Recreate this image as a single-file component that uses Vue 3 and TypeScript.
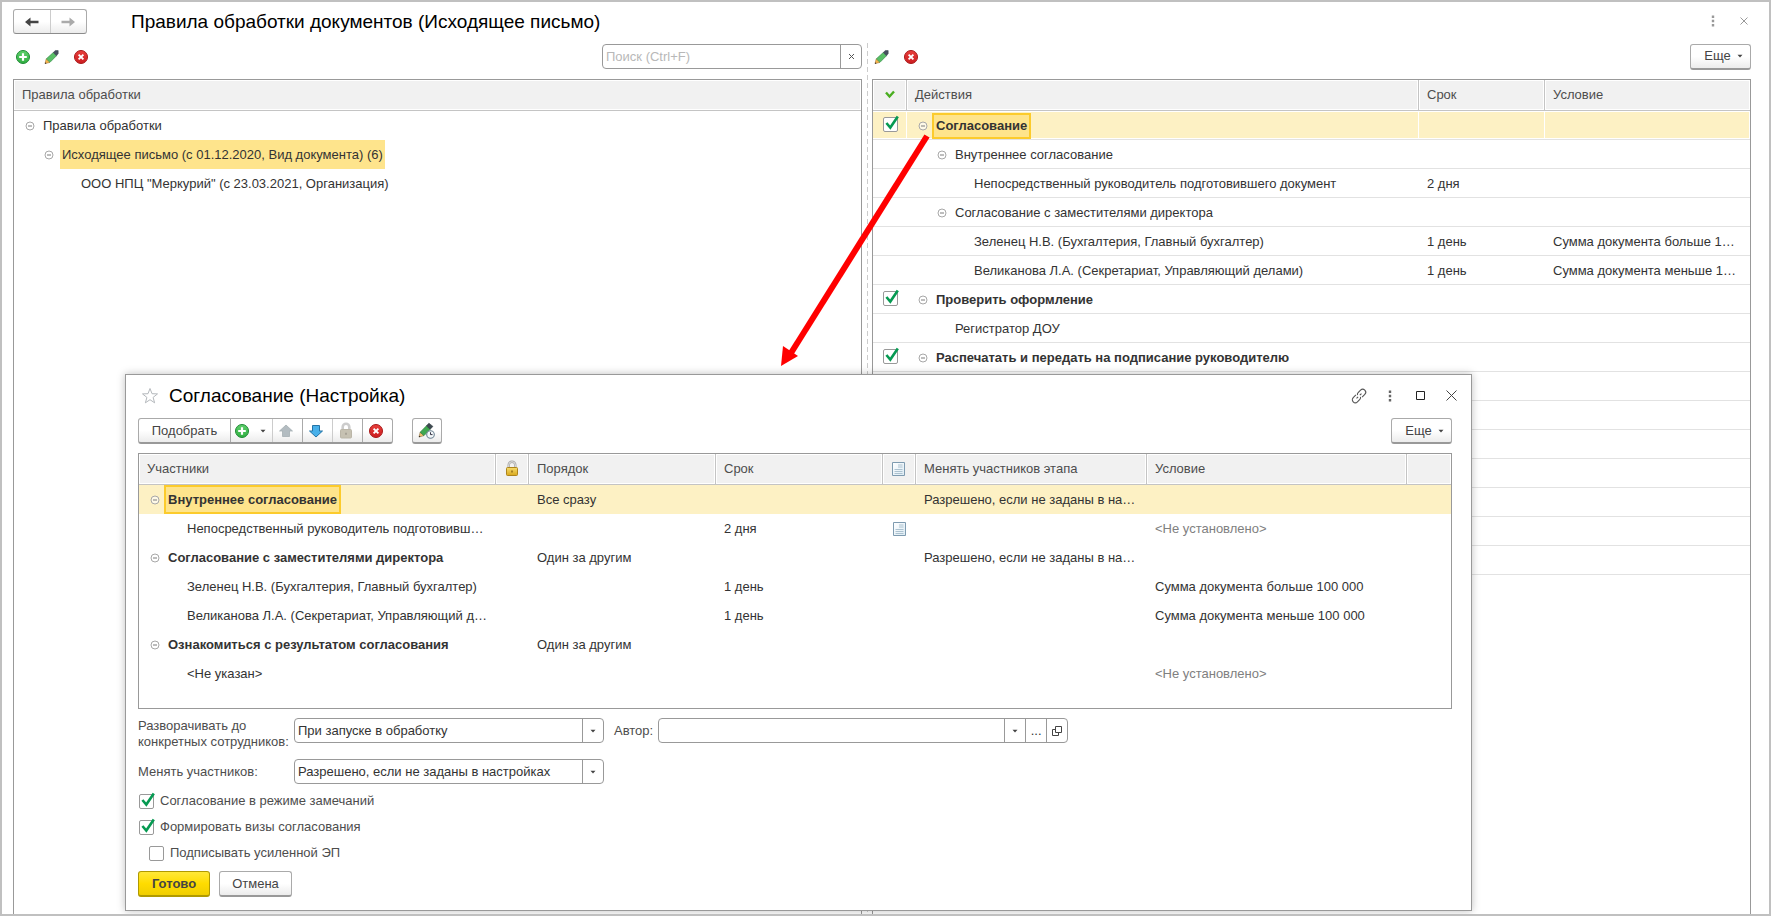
<script setup lang="ts">
import { ref } from 'vue'

interface RuleRow {
  text: string
  level: number
  group: boolean
  selected?: boolean
}

interface ActionRow {
  text: string
  level: number
  group: boolean
  bold?: boolean
  checked?: boolean
  term?: string
  condition?: string
  selected?: boolean
}

interface StageRow {
  text: string
  group: boolean
  order?: string
  term?: string
  note?: boolean
  change?: string
  condition?: string
  selected?: boolean
}

const rules: RuleRow[] = [
  { text: 'Правила обработки', level: 0, group: true },
  { text: 'Исходящее письмо (с 01.12.2020, Вид документа) (6)', level: 1, group: true, selected: true },
  { text: 'ООО НПЦ "Меркурий" (с 23.03.2021, Организация)', level: 2, group: false },
]

const actions = ref<ActionRow[]>([
  { text: 'Согласование', level: 0, group: true, bold: true, checked: true, selected: true },
  { text: 'Внутреннее согласование', level: 1, group: true },
  { text: 'Непосредственный руководитель подготовившего документ', level: 2, group: false, term: '2 дня' },
  { text: 'Согласование с заместителями директора', level: 1, group: true },
  { text: 'Зеленец Н.В. (Бухгалтерия, Главный бухгалтер)', level: 2, group: false, term: '1 день', condition: 'Сумма документа больше 1…' },
  { text: 'Великанова Л.А. (Секретариат, Управляющий делами)', level: 2, group: false, term: '1 день', condition: 'Сумма документа меньше 1…' },
  { text: 'Проверить оформление', level: 0, group: true, bold: true, checked: true },
  { text: 'Регистратор ДОУ', level: 1, group: false },
  { text: 'Распечатать и передать на подписание руководителю', level: 0, group: true, bold: true, checked: true },
])
const emptyRows = 7

const stages: StageRow[] = [
  { text: 'Внутреннее согласование', group: true, order: 'Все сразу', change: 'Разрешено, если не заданы в на…', selected: true },
  { text: 'Непосредственный руководитель подготовивш…', group: false, term: '2 дня', note: true, condition: '<Не установлено>' },
  { text: 'Согласование с заместителями директора', group: true, order: 'Один за другим', change: 'Разрешено, если не заданы в на…' },
  { text: 'Зеленец Н.В. (Бухгалтерия, Главный бухгалтер)', group: false, term: '1 день', condition: 'Сумма документа больше 100 000' },
  { text: 'Великанова Л.А. (Секретариат, Управляющий д…', group: false, term: '1 день', condition: 'Сумма документа меньше 100 000' },
  { text: 'Ознакомиться с результатом согласования', group: true, order: 'Один за другим' },
  { text: '<Не указан>', group: false, condition: '<Не установлено>' },
]

const search = ref('')
const author = ref('')
const expandMode = ref('При запуске в обработку')
const changeMode = ref('Разрешено, если не заданы в настройках')
const remarks = ref(true)
const visas = ref(true)
const signed = ref(false)
</script>

<template>
  <div class="window">
    <svg class="sprite" aria-hidden="true">
      <defs>
        <linearGradient id="g-green" x1="0" y1="0" x2="0" y2="1">
          <stop offset="0" stop-color="#5fd06c" /><stop offset="1" stop-color="#2fae40" />
        </linearGradient>
        <linearGradient id="g-red" x1="0" y1="0" x2="0" y2="1">
          <stop offset="0" stop-color="#e8403c" /><stop offset="1" stop-color="#cc1c20" />
        </linearGradient>
        <linearGradient id="g-gold" x1="0" y1="0" x2="0" y2="1">
          <stop offset="0" stop-color="#f6dc6c" /><stop offset="1" stop-color="#d9a81c" />
        </linearGradient>
        <linearGradient id="g-page" x1="0" y1="0" x2="1" y2="1">
          <stop offset="0" stop-color="#ffffff" /><stop offset="1" stop-color="#dcebf4" />
        </linearGradient>
        <symbol id="i-add" viewBox="0 0 16 16">
          <circle cx="8" cy="8" r="6.5" fill="url(#g-green)" stroke="#1e8a34" />
          <path d="M8 4.2v7.6M4.2 8h7.6" stroke="#fff" stroke-width="2.2" />
        </symbol>
        <symbol id="i-del" viewBox="0 0 16 16">
          <circle cx="8" cy="8" r="6.5" fill="url(#g-red)" stroke="#a81818" />
          <path d="M5.6 5.6l4.8 4.8M10.4 5.6l-4.8 4.8" stroke="#fff" stroke-width="1.9" />
        </symbol>
        <symbol id="i-pencil" viewBox="0 0 16 16">
          <path d="M1 14.600l1.200-4.800 3.800 3.600z" fill="#f5b54c" stroke="#9a6a2c" stroke-width=".5" />
          <path d="M.9 14.800l.4-1.600 1.200 1.200z" fill="#222" />
          <path d="M2.400 9.800L9.300 3.500l3.200 3.200L6 13.300z" fill="#58bf66" stroke="#3a8f4a" stroke-width=".7" />
          <path d="M9.300 3.500l2-1.900h2.900v2.900l-1.700 2.200z" fill="#46505e" stroke="#333c48" stroke-width=".5" />
        </symbol>
        <symbol id="i-pencil-clock" viewBox="0 0 18 18">
          <path d="M1 15l1.200-4.800L6 13.600z" fill="#f3c06c" stroke="#8a6a3c" stroke-width=".6" />
          <path d="M.9 15.200l.4-1.500 1.200 1.100z" fill="#222" />
          <path d="M2.200 10.200L8.500 3.800l3.700 3.400-6.200 6.400z" fill="#3fa850" stroke="#2c7d3c" stroke-width=".7" />
          <path d="M8.500 3.800l2.400-2.600 4 3.200-2.700 2.800z" fill="#3d4a50" stroke="#2c363c" stroke-width=".6" />
          <circle cx="12.500" cy="12.500" r="3.800" fill="#f4f8fa" stroke="#6d8292" stroke-width="1.1" />
          <path d="M12.500 10.300v2.300h2" fill="none" stroke="#334" />
        </symbol>
        <symbol id="i-up" viewBox="0 0 16 16">
          <path d="M8 2l6.500 6h-3v5.500h-7V8h-3z" fill="#b3bcc1" stroke="#a5aeb3" stroke-width=".8" stroke-linejoin="round" />
        </symbol>
        <symbol id="i-down" viewBox="0 0 16 16">
          <path d="M8 14l6.500-6h-3V2.500h-7V8h-3z" fill="#48b0ea" stroke="#2474a6" stroke-linejoin="round" />
        </symbol>
        <symbol id="i-lock" viewBox="0 0 16 18">
          <path d="M4.700 9V5a3.300 3.300 0 0 1 6.600 0v4" fill="none" stroke="#a8a8a8" stroke-width="2.400" />
          <path d="M4.700 9V5a3.300 3.300 0 0 1 6.600 0v4" fill="none" stroke="#dedede" />
          <rect x="2.500" y="7.500" width="11" height="8" rx="1" fill="url(#g-gold)" stroke="#ad841c" />
          <path d="M8 10.500v2" stroke="#8a6414" stroke-width="1.400" />
        </symbol>
        <symbol id="i-lock-off" viewBox="0 0 16 18">
          <path d="M4.700 9V5a3.300 3.300 0 0 1 6.600 0v4" fill="none" stroke="#ccc" stroke-width="2.600" />
          <rect x="2.500" y="7.500" width="11" height="8.500" rx="1" fill="#c6c1b2" stroke="#bbb6a8" />
          <path d="M8 10.700v2" stroke="#9a958a" stroke-width="1.400" />
        </symbol>
        <symbol id="i-page" viewBox="0 0 14 16">
          <path d="M.5 1.500h12v13H.5z" fill="url(#g-page)" stroke="#7e9bb0" />
          <path d="M6 4h4.500M6 6h4.500M2.500 8.500h8M2.500 10.500h8M2.500 12.500h8" stroke="#a5bccb" stroke-width=".9" />
        </symbol>
        <symbol id="i-minus" viewBox="0 0 10 10">
          <circle cx="5" cy="5" r="4" fill="#fff" fill-opacity=".6" stroke="#a8a8a8" />
          <path d="M3 5h4" stroke="#7c7c7c" />
        </symbol>
        <symbol id="i-check" viewBox="0 0 17 17">
          <path d="M3.400 8l3.900 4.500L14.800 1.400" fill="none" stroke="#069a52" stroke-width="2.600" />
        </symbol>
        <symbol id="i-dots" viewBox="0 0 4 12">
          <path d="M.8.5h2.400v2.500H.8zM.8 4.700h2.400v2.500H.8zM.8 9h2.400v2.500H.8z" fill="currentColor" />
        </symbol>
        <symbol id="i-caret" viewBox="0 0 6 4">
          <path d="M.5.800h5L3 3.600z" fill="#444" />
        </symbol>
        <symbol id="i-back" viewBox="0 0 16 12">
          <path d="M1 6l5.500-4.500v3.300h8v2.400h-8v3.300z" fill="currentColor" />
        </symbol>
        <symbol id="i-forward" viewBox="0 0 16 12">
          <path d="M15 6L9.500 1.500v3.300h-8v2.400h8v3.300z" fill="currentColor" />
        </symbol>
      </defs>
    </svg>

    <header class="titlebar">
      <div class="nav">
        <button type="button" aria-label="Назад"><svg width="16" height="12"><use href="#i-back" /></svg></button>
        <button type="button" class="forward" aria-label="Вперед"><svg width="16" height="12"><use href="#i-forward" /></svg></button>
      </div>
      <h1>Правила обработки документов (Исходящее письмо)</h1>
      <div class="controls main-controls">
        <button type="button" class="plain" aria-label="Меню"><svg width="4" height="12"><use href="#i-dots" /></svg></button>
        <button type="button" class="plain" aria-label="Закрыть"><svg width="8" height="8" viewBox="0 0 8 8"><path d="M.5.5l7 7M7.500.5l-7 7" stroke="currentColor" /></svg></button>
      </div>
    </header>

    <main class="panes">
      <section class="pane">
        <div class="bar">
          <button type="button" class="plain" aria-label="Добавить"><svg width="16" height="16"><use href="#i-add" /></svg></button>
          <button type="button" class="plain" aria-label="Изменить"><svg width="16" height="16"><use href="#i-pencil" /></svg></button>
          <button type="button" class="plain" aria-label="Удалить"><svg width="16" height="16"><use href="#i-del" /></svg></button>
          <div class="field search">
            <input v-model="search" type="text" placeholder="Поиск (Ctrl+F)" aria-label="Поиск">
            <button type="button" class="cell-button" aria-label="Очистить" @click="search = ''"><svg width="7" height="7" viewBox="0 0 7 7"><path d="M1 1l5 5M6 1l-5 5" stroke="#555" /></svg></button>
          </div>
        </div>
        <div class="grid">
          <table>
            <thead><tr><th>Правила обработки</th></tr></thead>
            <tbody>
              <tr v-for="row in rules" :key="row.text">
                <td>
                  <div class="tree" :class="'level-' + row.level">
                    <svg v-if="row.group" class="toggle" width="10" height="10"><use href="#i-minus" /></svg>
                    <span v-else class="toggle"></span>
                    <span class="tree-text" :class="{ marked: row.selected }">{{ row.text }}</span>
                  </div>
                </td>
              </tr>
            </tbody>
          </table>
        </div>
      </section>

      <div class="splitter"></div>

      <section class="pane">
        <div class="bar">
          <button type="button" class="plain" aria-label="Изменить действие"><svg width="16" height="16"><use href="#i-pencil" /></svg></button>
          <button type="button" class="plain" aria-label="Удалить действие"><svg width="16" height="16"><use href="#i-del" /></svg></button>
          <button type="button" class="button more">Еще <svg width="6" height="4"><use href="#i-caret" /></svg></button>
        </div>
        <div class="grid lined">
          <table>
            <colgroup><col class="w-mark"><col><col class="w-term"><col class="w-condition"></colgroup>
            <thead>
              <tr>
                <th class="center" aria-label="Включено"><svg width="10" height="10" viewBox="0 0 10 10"><path d="M1 2.500l3.500 4L9 1.500" fill="none" stroke="#4aae20" stroke-width="2.400" /></svg></th>
                <th>Действия</th>
                <th>Срок</th>
                <th>Условие</th>
              </tr>
            </thead>
            <tbody>
              <tr v-for="row in actions" :key="row.text" :class="{ current: row.selected }">
                <td class="center">
                  <span v-if="row.checked !== undefined" class="check">
                    <input v-model="row.checked" type="checkbox" :aria-label="row.text">
                    <svg v-if="row.checked" width="17" height="17"><use href="#i-check" /></svg>
                  </span>
                </td>
                <td>
                  <div class="tree" :class="['level-' + row.level, { bold: row.bold }]">
                    <svg v-if="row.group" class="toggle" width="10" height="10"><use href="#i-minus" /></svg>
                    <span v-else class="toggle"></span>
                    <span class="tree-text" :class="{ boxed: row.selected }">{{ row.text }}</span>
                  </div>
                </td>
                <td>{{ row.term }}</td>
                <td>{{ row.condition }}</td>
              </tr>
              <tr v-for="n in emptyRows" :key="n"><td></td><td></td><td></td><td></td></tr>
            </tbody>
          </table>
        </div>
      </section>
    </main>

    <section class="dialog" role="dialog" aria-labelledby="dialog-title">
      <header class="dialog-head">
        <svg width="18" height="18" viewBox="0 0 18 18"><path d="M9 1.500l2 5.200 5.500.2-4.400 3.500 1.500 5.400L9 12.700l-4.600 3.100 1.500-5.400L1.500 6.900 7 6.700z" fill="#fff" stroke="#b4b8bc" /></svg>
        <h2 id="dialog-title">Согласование (Настройка)</h2>
        <div class="controls dialog-controls">
          <button type="button" class="plain" aria-label="Ссылка">
            <svg width="18" height="18" viewBox="0 0 18 18"><g transform="rotate(-45 9 9)" fill="none" stroke="#555" stroke-width="1.100"><path d="M7.600 6H3.800a3 3 0 0 0 0 6h3.400a2.600 2.600 0 0 0 2.200-1.200" /><path d="M10.400 12h3.800a3 3 0 0 0 0-6h-3.400a2.600 2.600 0 0 0-2.200 1.200" /><path d="M5.500 9h2.300M10.200 9h2.300" /></g></svg>
          </button>
          <button type="button" class="plain" aria-label="Меню окна"><svg width="4" height="12"><use href="#i-dots" /></svg></button>
          <button type="button" class="plain" aria-label="Развернуть"><svg width="9" height="9" viewBox="0 0 9 9"><path d="M.5.5h8v8h-8z" fill="none" stroke="#222" /></svg></button>
          <button type="button" class="plain" aria-label="Закрыть окно"><svg width="11" height="11" viewBox="0 0 11 11"><path d="M.5.5l10 10M10.500.5l-10 10" stroke="#444" /></svg></button>
        </div>
      </header>

      <div class="dialog-bar">
        <div class="group">
          <button type="button" class="pick">Подобрать</button>
          <button type="button" class="add" aria-label="Добавить участника"><svg width="16" height="16"><use href="#i-add" /></svg><svg width="6" height="4"><use href="#i-caret" /></svg></button>
          <button type="button" class="off" aria-label="Вверх"><svg width="16" height="16"><use href="#i-up" /></svg></button>
          <button type="button" aria-label="Вниз"><svg width="16" height="16"><use href="#i-down" /></svg></button>
          <button type="button" class="off" aria-label="Заблокировать"><svg width="16" height="18"><use href="#i-lock-off" /></svg></button>
          <button type="button" aria-label="Удалить участника"><svg width="16" height="16"><use href="#i-del" /></svg></button>
        </div>
        <button type="button" class="button schedule" aria-label="Сроки"><svg width="18" height="18"><use href="#i-pencil-clock" /></svg></button>
        <button type="button" class="button more">Еще <svg width="6" height="4"><use href="#i-caret" /></svg></button>
      </div>

      <div class="grid stages">
        <table>
          <colgroup><col><col class="w-icon"><col class="w-order"><col class="w-days"><col class="w-icon"><col class="w-change"><col class="w-rule"><col class="w-rest"></colgroup>
          <thead>
            <tr>
              <th>Участники</th>
              <th class="center" aria-label="Блокировка"><svg width="16" height="18"><use href="#i-lock" /></svg></th>
              <th>Порядок</th>
              <th>Срок</th>
              <th class="center" aria-label="Описание"><svg width="14" height="16"><use href="#i-page" /></svg></th>
              <th>Менять участников этапа</th>
              <th>Условие</th>
              <th></th>
            </tr>
          </thead>
          <tbody>
            <tr v-for="row in stages" :key="row.text" :class="{ current: row.selected }">
              <td class="first">
                <div class="tree" :class="row.group ? 'level-0 bold' : 'level-1'">
                  <svg v-if="row.group" class="toggle" width="10" height="10"><use href="#i-minus" /></svg>
                  <span v-else class="toggle"></span>
                  <span class="tree-text" :class="{ boxed: row.selected }">{{ row.text }}</span>
                </div>
              </td>
              <td></td>
              <td>{{ row.order }}</td>
              <td>{{ row.term }}</td>
              <td class="center"><svg v-if="row.note" width="14" height="16"><use href="#i-page" /></svg></td>
              <td>{{ row.change }}</td>
              <td :class="{ muted: row.condition === '<Не установлено>' }">{{ row.condition }}</td>
              <td></td>
            </tr>
          </tbody>
        </table>
      </div>

      <form class="form" @submit.prevent>
        <div class="form-row">
          <label class="caption" for="expand-mode">Разворачивать до конкретных сотрудников:</label>
          <div class="field select">
            <select id="expand-mode" v-model="expandMode"><option>При запуске в обработку</option></select>
            <span class="arrow"><svg width="6" height="4"><use href="#i-caret" /></svg></span>
          </div>
          <label class="author-label" for="author">Автор:</label>
          <div class="field author">
            <input id="author" v-model="author" type="text">
            <button type="button" class="cell-button" aria-label="Выбрать из списка"><svg width="6" height="4"><use href="#i-caret" /></svg></button>
            <button type="button" class="cell-button" aria-label="Выбрать">...</button>
            <button type="button" class="cell-button" aria-label="Открыть"><svg width="10" height="10" viewBox="0 0 10 10"><path d="M3.500.5h6v6h-6zM3.500 3.500h-3v6h6v-3" fill="none" stroke="#444" /></svg></button>
          </div>
        </div>
        <div class="form-row second">
          <label class="caption" for="change-mode">Менять участников:</label>
          <div class="field select">
            <select id="change-mode" v-model="changeMode"><option>Разрешено, если не заданы в настройках</option></select>
            <span class="arrow"><svg width="6" height="4"><use href="#i-caret" /></svg></span>
          </div>
        </div>
        <label class="option">
          <span class="check"><input v-model="remarks" type="checkbox"><svg v-if="remarks" width="17" height="17"><use href="#i-check" /></svg></span>
          Согласование в режиме замечаний
        </label>
        <label class="option">
          <span class="check"><input v-model="visas" type="checkbox"><svg v-if="visas" width="17" height="17"><use href="#i-check" /></svg></span>
          Формировать визы согласования
        </label>
        <label class="option nested">
          <span class="check"><input v-model="signed" type="checkbox"><svg v-if="signed" width="17" height="17"><use href="#i-check" /></svg></span>
          Подписывать усиленной ЭП
        </label>
        <div class="actions">
          <button type="submit" class="button primary">Готово</button>
          <button type="button" class="button">Отмена</button>
        </div>
      </form>
    </section>

    <svg class="pointer" width="160" height="240" viewBox="0 0 160 240" aria-hidden="true">
      <path d="M152 8L16 225" stroke="#f00" stroke-width="6" />
      <path d="M6 238l2-20 15 10z" fill="#f00" />
    </svg>
  </div>
</template>

<style>
body {
  margin: 0;
  background: #fff;
}
</style>

<style scoped>
.window {
  position: relative;
  display: flex;
  flex-direction: column;
  box-sizing: border-box;
  min-height: 100vh;
  overflow: hidden;
  border: 2px solid #c0c0c0;
  padding: 7px 18px 0 11px;
  background: #fff;
  color: #333;
  font: 13px/16px "Liberation Sans", Arial, sans-serif;
}
.sprite {
  position: absolute;
  width: 0;
  height: 0;
}
svg {
  display: block;
  flex: none;
}
button,
input,
select {
  box-sizing: border-box;
  margin: 0;
  padding: 0;
  border: 0;
  background: none;
  color: inherit;
  font: inherit;
}
h1,
h2 {
  margin: 0;
  color: #000;
  font-size: 19px;
  font-weight: 400;
  line-height: 24px;
}
.plain {
  display: flex;
  align-items: center;
  justify-content: center;
}

.titlebar {
  display: flex;
  align-items: center;
  height: 25px;
}
.nav {
  display: flex;
  box-sizing: border-box;
  width: 74px;
  height: 25px;
  margin-right: 44px;
  border: 1px solid #aaa;
  border-bottom-color: #8c8c8c;
  border-radius: 3px;
  background: linear-gradient(#fff 50%, #ececec);
  color: #444;
}
.nav button {
  display: flex;
  flex: 1;
  align-items: center;
  justify-content: center;
}
.nav .forward {
  border-left: 1px solid #ccc;
  color: #aaa;
}
.controls {
  display: flex;
  align-items: center;
  margin-left: auto;
}
.controls .plain {
  width: 31px;
  height: 24px;
}
.main-controls {
  padding-bottom: 2px;
  margin-right: -8px;
  color: #999;
}

.panes {
  display: grid;
  flex: 1;
  grid-template-columns: minmax(0, 849fr) 10px minmax(0, 879fr);
  padding-top: 9px;
}
.pane {
  display: flex;
  flex-direction: column;
  min-width: 0;
}
.splitter {
  width: 1px;
  margin: 0 auto;
  background: repeating-linear-gradient(#ccc 0 5px, transparent 5px 8px);
}
.bar {
  display: flex;
  gap: 13px;
  align-items: center;
  height: 27px;
  padding-left: 2px;
  margin-bottom: 9px;
}
.field {
  position: relative;
  display: flex;
  box-sizing: border-box;
  height: 25px;
  border: 1px solid #999;
  border-radius: 4px;
  background: #fff;
  color: #333;
}
.field input {
  flex: 1;
  min-width: 0;
  padding: 0 3px;
  outline: none;
}
.field input::placeholder {
  color: #b8b8b8;
  opacity: 1;
}
.cell-button {
  display: flex;
  flex: none;
  align-items: center;
  justify-content: center;
  width: 21px;
  border-left: 1px solid #999;
}
.search {
  width: 260px;
  margin-left: auto;
}
.button {
  display: flex;
  box-sizing: border-box;
  align-items: center;
  justify-content: center;
  height: 26px;
  border: 1px solid #aaa;
  border-bottom: 2px solid #999;
  border-radius: 3px;
  background: linear-gradient(#fff 50%, #ececec);
  color: #444;
}
.more {
  gap: 6px;
  width: 61px;
  padding-left: 6px;
  margin-left: auto;
}

.grid {
  flex: 1;
  border: 1px solid #999;
  border-bottom: 0;
  background: #fff;
}
table {
  width: 100%;
  border-spacing: 0;
  table-layout: fixed;
}
th,
td {
  box-sizing: border-box;
  overflow: hidden;
  padding: 0 8px;
  text-align: left;
  text-overflow: ellipsis;
  white-space: nowrap;
}
th {
  height: 31px;
  border-right: 1px solid #c4c4c4;
  border-bottom: 1px solid #c4c4c4;
  background: #f1f1f1;
  box-shadow: inset 0 0 0 1px #fff;
  color: #4d4d4d;
  font-weight: 400;
}
th:last-child {
  border-right: 0;
}
td {
  height: 29px;
}
.first {
  padding-right: 2px;
}
.lined td {
  padding-top: 1px;
  border-bottom: 1px solid #e2e2e2;
}
th.center,
td.center {
  padding: 0;
}
.lined td.center {
  padding: 0 0 1px;
}
.center > svg,
.center > .check {
  margin: 0 auto;
}
.current td {
  background: #fdf1c4;
}
.lined .current td {
  box-shadow: inset -1px 0 #fff, inset 0 1px #fff, inset 0 -1px #fff;
}
.w-mark { width: 34px; }
.w-term { width: 126px; }
.w-condition { width: 205px; }
.w-icon { width: 33px; }
.w-order { width: 187px; }
.w-days { width: 167px; }
.w-change { width: 231px; }
.w-rule { width: 260px; }
.w-rest { width: 44px; }

.tree {
  display: flex;
  align-items: center;
  margin-left: 3px;
}
.level-1 {
  padding-left: 19px;
}
.level-2 {
  padding-left: 38px;
}
.toggle {
  flex: none;
  width: 10px;
  margin-right: 6px;
}
.tree-text {
  overflow: hidden;
  padding: 0 2px;
  line-height: 29px;
  text-overflow: ellipsis;
}
.lined .tree-text {
  line-height: 26px;
}
.bold {
  font-weight: 700;
}
.marked {
  background: #fee48c;
}
.boxed {
  padding: 0 4px;
  margin-left: -2px;
  outline: 2px solid #fccb2c;
  outline-offset: -2px;
  background: #fee48c;
}
.check {
  position: relative;
  display: block;
  flex: none;
  width: 15px;
  height: 15px;
}
.check input {
  display: block;
  width: 15px;
  height: 15px;
  border: 1px solid #999;
  border-radius: 2px;
  appearance: none;
  background: #fff;
}
.check svg {
  position: absolute;
  top: -2px;
  left: 0;
  pointer-events: none;
}
.muted {
  color: #808080;
}

.dialog {
  position: absolute;
  top: 372px;
  right: 297px;
  left: 123px;
  box-sizing: border-box;
  border: 1px solid #999;
  padding: 8px 19px 13px 12px;
  background: #fff;
  box-shadow: 0 0 8px rgb(0 0 0 / 25%);
}
.dialog-head {
  display: flex;
  gap: 10px;
  align-items: center;
  height: 25px;
  padding-left: 3px;
}
.dialog-controls {
  margin-right: -15px;
  color: #666;
}
.dialog-bar {
  display: flex;
  align-items: center;
  margin: 10px 0 9px;
}
.group {
  display: flex;
  box-sizing: border-box;
  height: 26px;
  border: 1px solid #aaa;
  border-bottom: 2px solid #999;
  border-radius: 3px;
  background: linear-gradient(#fff 50%, #ececec);
  color: #444;
}
.group button {
  display: flex;
  align-items: center;
  justify-content: center;
  width: 30px;
  padding-right: 3px;
  border-left: 1px solid #aaa;
}
.group .pick {
  width: 91px;
  padding: 0;
  border-left: 0;
}
.group .add {
  gap: 10px;
  width: 42px;
}
.group .off {
  border-left-color: #ccc;
}
.schedule {
  width: 30px;
  margin-left: 19px;
}
.stages {
  min-height: 254px;
  border-bottom: 1px solid #999;
}

.form {
  padding-top: 9px;
  color: #4d4d4d;
}
.form-row {
  display: flex;
  align-items: flex-start;
}
.second {
  align-items: center;
  margin: 9px 0;
}
.caption {
  width: 156px;
}
.select {
  width: 310px;
}
.select select {
  width: 100%;
  padding: 0 24px 0 3px;
  appearance: none;
  outline: none;
}
.arrow {
  position: absolute;
  top: 0;
  right: 0;
  bottom: 0;
  display: flex;
  align-items: center;
  justify-content: center;
  width: 20px;
  border-left: 1px solid #999;
  pointer-events: none;
}
.author-label {
  margin-left: 10px;
  line-height: 25px;
}
.author {
  width: 410px;
  margin-left: 5px;
}
.option {
  display: flex;
  gap: 6px;
  align-items: center;
  height: 16px;
  padding-left: 1px;
  margin-bottom: 10px;
}
.nested {
  padding-left: 11px;
}
.actions {
  display: flex;
  gap: 9px;
}
.actions .button {
  width: 73px;
}
.actions .primary {
  width: 72px;
  border-color: #b09a00;
  background: linear-gradient(#ffe838, #ffdc00 50%, #f0ce00);
  font-weight: 700;
}

.pointer {
  position: absolute;
  top: 126px;
  left: 773px;
  pointer-events: none;
}
</style>
